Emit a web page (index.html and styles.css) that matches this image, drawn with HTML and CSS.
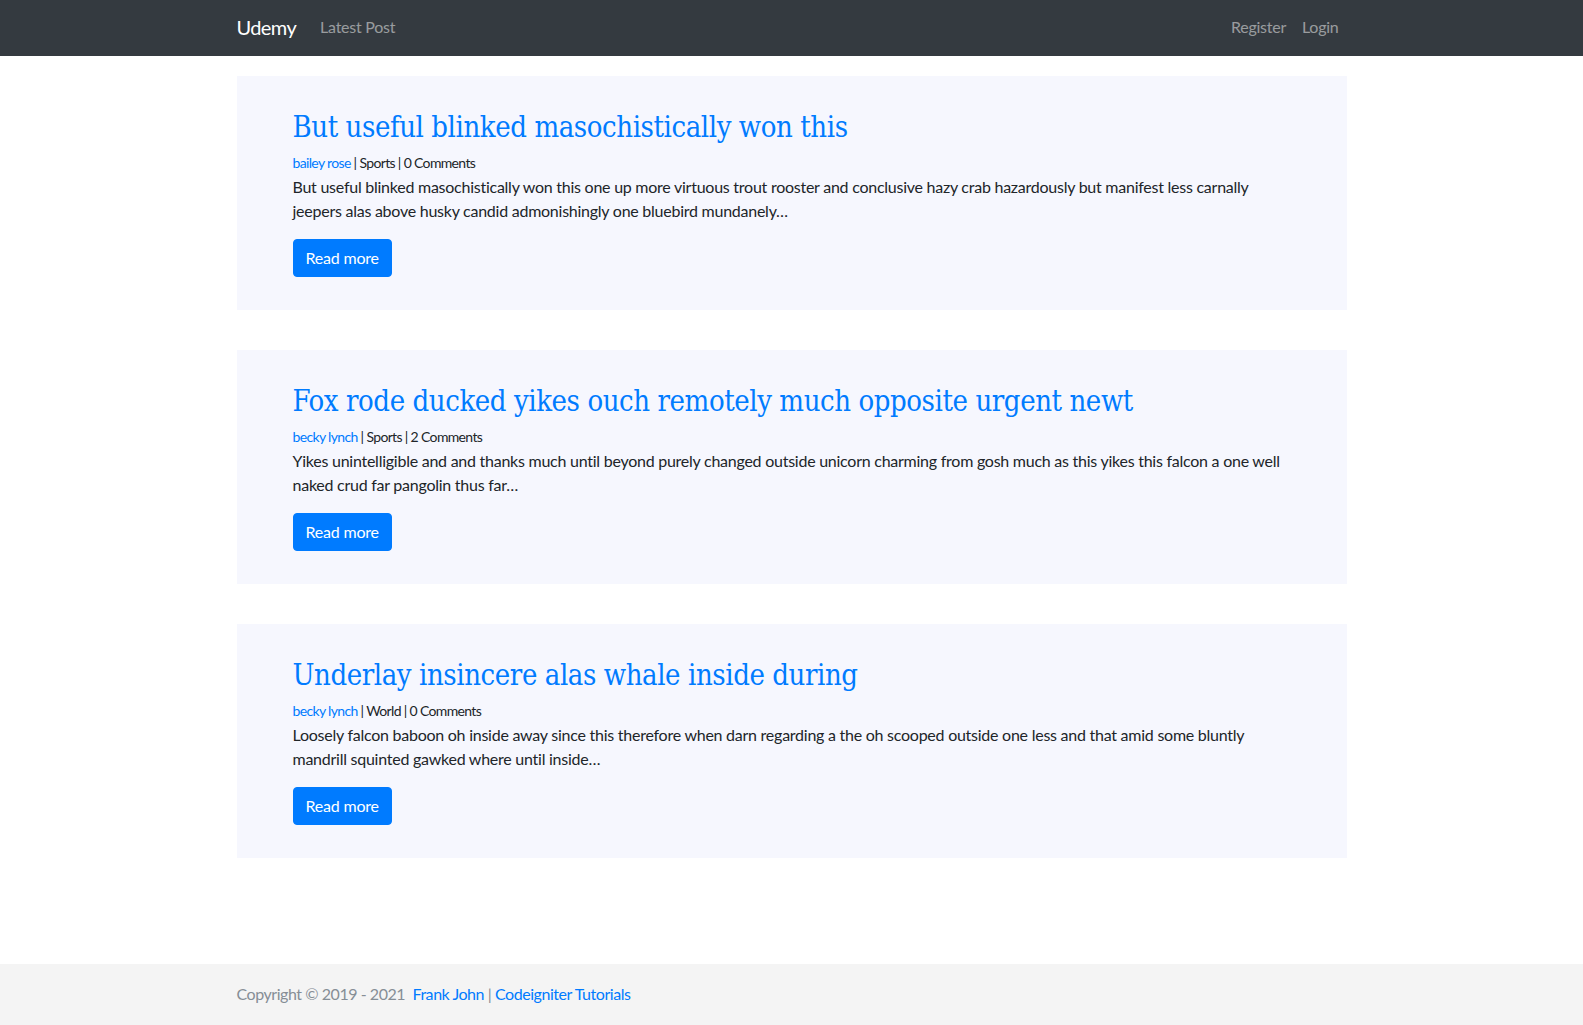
FILE: index.html
```html
<!DOCTYPE html>
<html lang="en">
<head>
<meta charset="utf-8">
<title>Udemy</title>
<link rel="stylesheet" href="styles.css">
</head>
<body>
<nav class="navbar">
  <div class="container nav-inner">
    <div class="nav-left">
      <a class="brand" href="#">Udemy</a>
      <a class="nav-link" href="#">Latest Post</a>
    </div>
    <div class="nav-right">
      <a class="nav-link" href="#">Register</a>
      <a class="nav-link" href="#">Login</a>
    </div>
  </div>
</nav>

<main class="container main">
  <article class="post">
    <h2 class="post-title"><a href="#">But useful blinked masochistically won this</a></h2>
    <div class="meta"><a href="#">bailey rose</a> | Sports | 0 Comments</div>
    <p class="excerpt">But useful blinked masochistically won this one up more virtuous trout rooster and conclusive hazy crab hazardously but manifest less carnally jeepers alas above husky candid admonishingly one bluebird mundanely…</p>
    <a class="btn" href="#">Read more</a>
  </article>

  <article class="post">
    <h2 class="post-title"><a href="#">Fox rode ducked yikes ouch remotely much opposite urgent newt</a></h2>
    <div class="meta"><a href="#">becky lynch</a> | Sports | 2 Comments</div>
    <p class="excerpt">Yikes unintelligible and and thanks much until beyond purely changed outside unicorn charming from gosh much as this yikes this falcon a one well naked crud far pangolin thus far…</p>
    <a class="btn" href="#">Read more</a>
  </article>

  <article class="post">
    <h2 class="post-title"><a href="#">Underlay insincere alas whale inside during</a></h2>
    <div class="meta"><a href="#">becky lynch</a> | World | 0 Comments</div>
    <p class="excerpt">Loosely falcon baboon oh inside away since this therefore when darn regarding a the oh scooped outside one less and that amid some bluntly mandrill squinted gawked where until inside…</p>
    <a class="btn" href="#">Read more</a>
  </article>
</main>

<footer class="footer">
  <div class="container">
    <span class="copy">Copyright © 2019 - 2021</span>&nbsp; <a href="#">Frank John</a> | <a href="#">Codeigniter Tutorials</a>
  </div>
</footer>
</body>
</html>
```

FILE: styles.css
```css
* { box-sizing: border-box; }
html, body { margin: 0; padding: 0; }
body {
  font-family: "Lato", "Noto Sans", sans-serif;
  font-size: 16px;
  line-height: 1.5;
  letter-spacing: -0.25px;
  color: #212529;
  background: #fff;
  min-height: 1025px;
  display: flex;
  flex-direction: column;
}
a { color: #007bff; text-decoration: none; }

.container {
  width: 1140px;
  margin: 0 auto;
  padding: 0 15px;
}

.navbar {
  background: #343a40;
  padding: 8px 0;
}
.nav-inner {
  display: flex;
  justify-content: space-between;
  align-items: center;
}
.nav-left, .nav-right { display: flex; align-items: center; }
.brand {
  color: #fff;
  font-size: 20px;
  line-height: 30px;
  padding: 4px 0 6px;
  margin-right: 16px;
  letter-spacing: -0.6px;
}
.nav-link {
  color: rgba(255,255,255,0.5);
  padding: 7px 8px 9px;
  line-height: 24px;
}

.main {
  padding-top: 20px;
  flex: 1;
}
.post {
  background: #f6f7fe;
  padding: 32px 56px 33px;
  margin-bottom: 40px;
}
.post-title {
  margin: 0 0 8px;
  font-family: "DejaVu Serif", "Liberation Serif", serif;
  font-stretch: condensed;
  font-weight: 400;
  font-size: 29px;
  line-height: 38px;
  letter-spacing: -0.42px;
}
.meta {
  font-size: 14px;
  line-height: 17px;
  padding-bottom: 4px;
  letter-spacing: -0.65px;
}
.excerpt {
  margin: 0 0 16px;
}
.btn {
  display: inline-block;
  background: #007bff;
  color: #fff;
  padding: 6px 12px;
  border: 1px solid #007bff;
  border-radius: 4px;
  line-height: 24px;
  letter-spacing: -0.2px;
}

.footer {
  background: #f4f4f4;
  padding: 18px 0 19px;
  color: #868e96;
  line-height: 24px;
  letter-spacing: -0.45px;
}
```
